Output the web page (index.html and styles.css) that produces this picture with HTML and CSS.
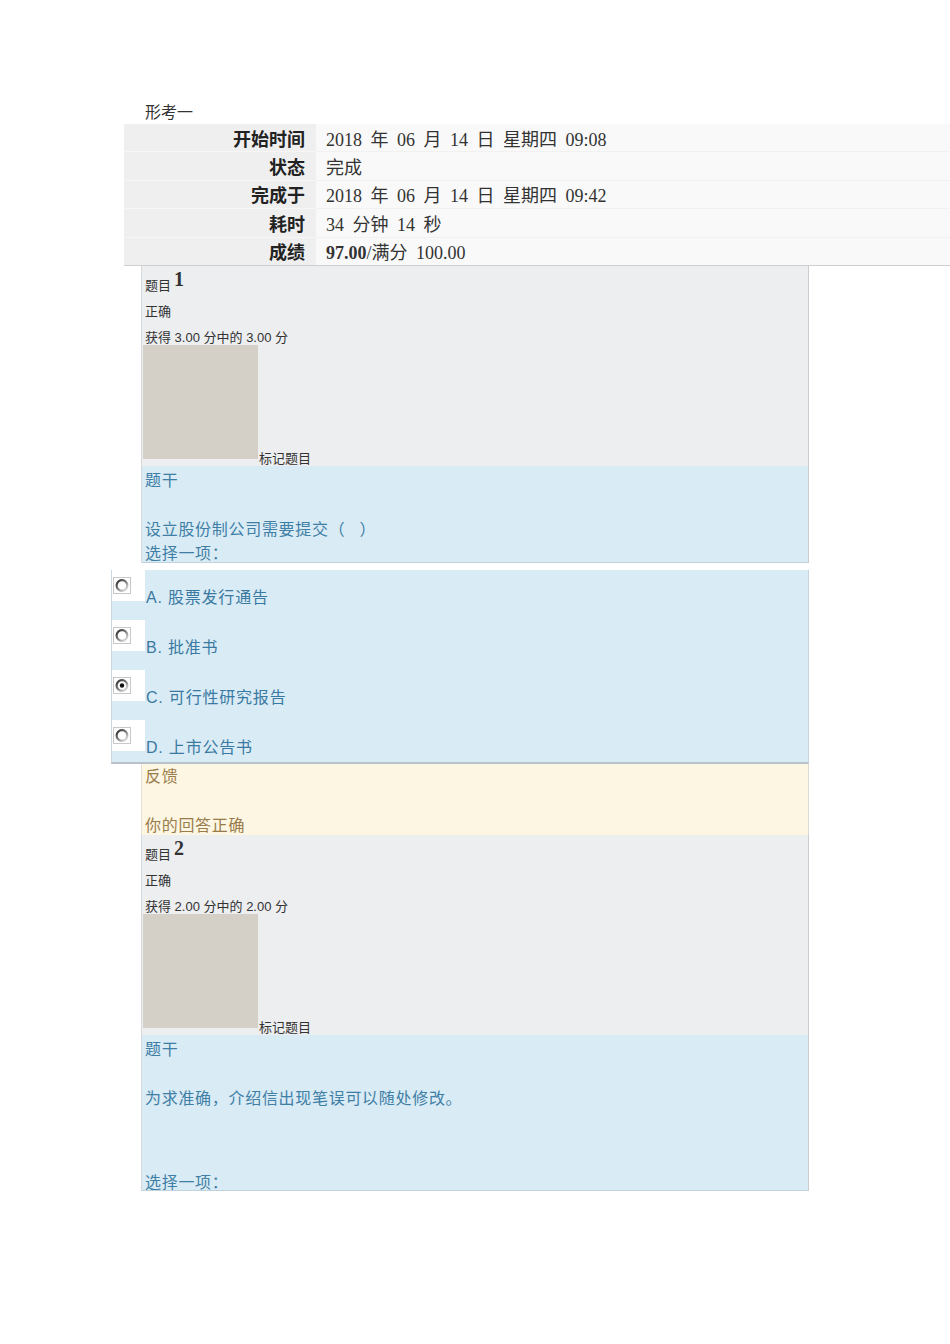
FILE: index.html
```html
<!DOCTYPE html>
<html lang="zh-CN">
<head>
<meta charset="utf-8">
<title>形考一</title>
<link rel="stylesheet" href="styles.css">
</head>
<body>
<svg class="defs" width="0" height="0" aria-hidden="true"><defs><linearGradient id="rg1" x1="0.15" y1="0.1" x2="0.85" y2="0.9"><stop offset="0" stop-color="#3c3c3c"/><stop offset="0.5" stop-color="#808080"/><stop offset="1" stop-color="#d8d8d8"/></linearGradient></defs></svg>
<div class="page">
  <div class="title">形考一</div>

  <div class="summary">
    <div class="row"><div class="cell label">开始时间</div><div class="cell value">2018 年 06 月 14 日 星期四 09:08</div></div>
    <div class="row"><div class="cell label">状态</div><div class="cell value">完成</div></div>
    <div class="row"><div class="cell label">完成于</div><div class="cell value">2018 年 06 月 14 日 星期四 09:42</div></div>
    <div class="row"><div class="cell label">耗时</div><div class="cell value">34 分钟 14 秒</div></div>
    <div class="row last"><div class="cell label">成绩</div><div class="cell value"><b>97.00</b>/满分 100.00</div></div>
  </div>

  <div class="que">
    <div class="info">
      <div class="qno"><span class="qlabel">题目</span><span class="num">1</span></div>
      <div class="state">正确</div>
      <div class="grade">获得 3.00 分中的 3.00 分</div>
      <div class="flagrow"><div class="flagbox"></div><span class="flag">标记题目</span></div>
    </div>
    <div class="content c1">
      <div class="line">题干</div>
      <div class="blank"></div>
      <div class="line">设立股份制公司需要提交（&nbsp;&nbsp;&nbsp;）</div>
      <div class="line">选择一项：</div>
    </div>
  </div>

  <div class="answer">
    <div class="opt">
      <span class="radio"><svg width="18" height="17" viewBox="0 0 18 17"><rect x="0.5" y="0.5" width="17" height="16" fill="#fff" stroke="#c8c8c8"/><circle cx="9" cy="8.5" r="5.4" fill="#fff" stroke="url(#rg1)" stroke-width="2.2"/></svg></span>
      <span class="otext">A. 股票发行通告</span>
    </div>
    <div class="opt">
      <span class="radio"><svg width="18" height="17" viewBox="0 0 18 17"><rect x="0.5" y="0.5" width="17" height="16" fill="#fff" stroke="#c8c8c8"/><circle cx="9" cy="8.5" r="5.4" fill="#fff" stroke="url(#rg1)" stroke-width="2.2"/></svg></span>
      <span class="otext">B. 批准书</span>
    </div>
    <div class="opt">
      <span class="radio"><svg width="18" height="17" viewBox="0 0 18 17"><rect x="0.5" y="0.5" width="17" height="16" fill="#fff" stroke="#c8c8c8"/><circle cx="9" cy="8.5" r="5.4" fill="#fff" stroke="url(#rg1)" stroke-width="2.2"/><circle cx="9" cy="8.5" r="2.2" fill="#111"/></svg></span>
      <span class="otext">C. 可行性研究报告</span>
    </div>
    <div class="opt">
      <span class="radio"><svg width="18" height="17" viewBox="0 0 18 17"><rect x="0.5" y="0.5" width="17" height="16" fill="#fff" stroke="#c8c8c8"/><circle cx="9" cy="8.5" r="5.4" fill="#fff" stroke="url(#rg1)" stroke-width="2.2"/></svg></span>
      <span class="otext">D. 上市公告书</span>
    </div>
  </div>

  <div class="feedback">
    <div class="fline">反馈</div>
    <div class="fblank"></div>
    <div class="fline">你的回答正确</div>
  </div>

  <div class="que">
    <div class="info">
      <div class="qno"><span class="qlabel">题目</span><span class="num">2</span></div>
      <div class="state">正确</div>
      <div class="grade">获得 2.00 分中的 2.00 分</div>
      <div class="flagrow"><div class="flagbox"></div><span class="flag">标记题目</span></div>
    </div>
    <div class="content c2">
      <div class="line">题干</div>
      <div class="blank"></div>
      <div class="line">为求准确，介绍信出现笔误可以随处修改。</div>
      <div class="spacer"></div>
      <div class="line">选择一项：</div>
    </div>
  </div>
</div>
</body>
</html>
```

FILE: styles.css
```css
html, body {
  margin: 0;
  padding: 0;
  background: #ffffff;
}

body {
  font-family: "Liberation Serif", "Noto Sans CJK SC", serif;
  color: #333333;
}

.defs {
  position: absolute;
  width: 0;
  height: 0;
}

.page {
  padding-top: 100px;
  padding-bottom: 60px;
}

.title {
  margin-left: 145px;
  font-size: 16px;
  height: 24px;
  padding-top: 2px;
  line-height: 22px;
  box-sizing: border-box;
  color: #333;
}

.summary {
  margin-left: 124px;
  width: 826px;
}

.row {
  display: grid;
  grid-template-columns: 192px 1fr;
  height: 28.4px;
}

.cell {
  box-sizing: border-box;
  height: 28.4px;
  padding-top: 3.5px;
  line-height: 24px;
  font-size: 18px;
  white-space: nowrap;
}

.label {
  background: #efefef;
  border-bottom: 1px solid #f6f6f6;
  text-align: right;
  padding-right: 11px;
  font-family: "Liberation Sans", "Noto Sans CJK SC", sans-serif;
  font-weight: bold;
  color: #222;
}

.value {
  background: #f9f9f9;
  border-bottom: 1px solid #f1f1f1;
  padding-left: 10px;
  word-spacing: 4px;
  color: #333;
}

.value b {
  font-weight: bold;
}

.row.last .cell {
  border-bottom: 1px solid #cfcfcf;
}

/* question */
.que {
  margin-left: 141px;
  width: 668px;
  box-sizing: border-box;
  border-left: 1px solid #d6d9dc;
  border-right: 1px solid #c9cdd1;
}

.info {
  background: #eceef0;
  height: 200px;
  box-sizing: border-box;
  padding-left: 3px;
  font-family: "Liberation Sans", "Noto Sans CJK SC", sans-serif;
  font-size: 13px;
  color: #333;
}

.qno {
  height: 30px;
  display: flex;
  align-items: flex-end;
}

.qlabel {
  line-height: 16px;
  margin-bottom: 2px;
}

.num {
  font-family: "Liberation Serif", serif;
  font-weight: bold;
  font-size: 20px;
  line-height: 20px;
  margin-left: 3px;
  margin-bottom: 7px;
  color: #333;
}

.state {
  margin-top: 8px;
  line-height: 16px;
}

.grade {
  margin-top: 12px;
  line-height: 12px;
  white-space: nowrap;
}

.flagrow {
  display: flex;
  align-items: flex-end;
  margin-left: -2px;
  margin-top: 1px;
}

.flagbox {
  width: 115px;
  height: 114px;
  background: #d4d0c8;
}

.flag {
  line-height: 14px;
  margin-left: 1px;
  margin-bottom: -7px;
}

.content {
  background: #d9ebf5;
  border-bottom: 1px solid #bfd2de;
  padding-left: 3px;
  padding-top: 3px;
  box-sizing: content-box;
  font-size: 16px;
  line-height: 24px;
  letter-spacing: 0.7px;
  color: #3f7fa6;
}

.content.c1 {
  height: 93px;
}

.content.c2 {
  height: 152px;
}

.line {
  height: 24px;
  white-space: nowrap;
}

.blank {
  height: 25px;
}

.spacer {
  height: 60px;
}

/* answers */
.answer {
  margin-top: 7px;
  margin-left: 111px;
  width: 698px;
  box-sizing: border-box;
  background: #d9ebf5;
  border-left: 1px solid #c9d8e2;
  border-right: 1px solid #c6d4de;
  border-bottom: 2px solid #b7c2ca;
  display: flex;
  flex-direction: column;
  gap: 7px;
}

.opt {
  height: 43px;
  display: flex;
  align-items: flex-start;
}

.opt:last-child {
  height: 42px;
}

.radio {
  width: 33px;
  height: 31px;
  background: #ffffff;
  box-sizing: border-box;
  padding: 7px 0 0 1px;
  display: block;
}

.radio svg {
  display: block;
}

.otext {
  margin-left: 1px;
  margin-top: 18px;
  font-family: "Liberation Sans", "Noto Sans CJK SC", sans-serif;
  font-size: 16px;
  line-height: 20px;
  letter-spacing: 0.8px;
  color: #3a7aa2;
  white-space: nowrap;
}

/* feedback */
.feedback {
  margin-left: 141px;
  width: 668px;
  box-sizing: border-box;
  height: 71px;
  background: #fcf6e3;
  border-left: 1px solid #e6e2d4;
  border-right: 1px solid #dcdad2;
  padding-left: 3px;
  padding-top: 1px;
  font-size: 16px;
  letter-spacing: 0.7px;
  color: #9a7c4a;
}

.fline {
  height: 24px;
  line-height: 24px;
  white-space: nowrap;
}

.fblank {
  height: 25px;
}
```
